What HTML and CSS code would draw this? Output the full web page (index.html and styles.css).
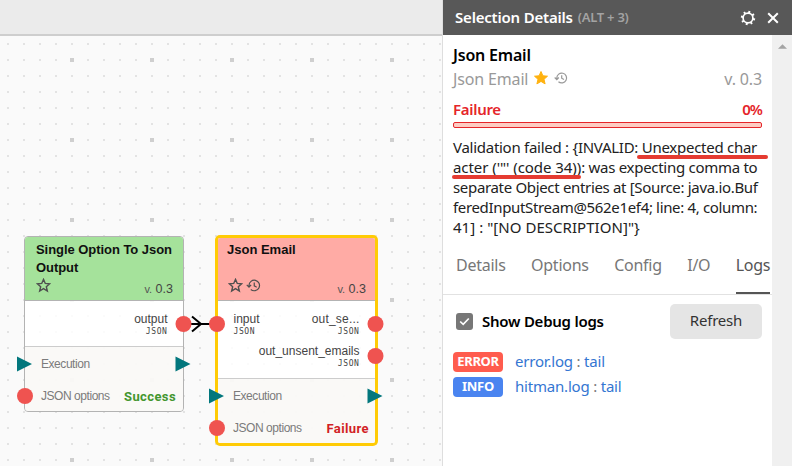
FILE: index.html
```html
<!DOCTYPE html>
<html lang="en">
<head>
<meta charset="utf-8">
<title>Selection Details</title>
<link rel="stylesheet" href="styles.css">
</head>
<body>
<svg class="defs" width="0" height="0">
  <symbol id="star" viewBox="0 0 16 16"><path d="M8 1.500l1.900 4.300 4.600.4-3.500 3.100 1.100 4.600L8 11.400l-4.100 2.500L5 9.300 1.500 6.200l4.600-.4z"/></symbol>
  <symbol id="history" viewBox="0 0 16 16"><path d="M3.200 9.200V8a5.600 5.600 0 1 1 1.900 4.200M.8 7.400l2.400 2.400 2.300-2.400M8.800 4.800v3.500l2.600 1.500"/></symbol>
</svg>
<div class="app">
  <main class="workspace">
    <div class="toolbar"></div>
    <div class="canvas">
      <section class="node node-success">
        <header class="node-head">
          <h3>Single Option To Json Output</h3>
          <div class="node-meta"><svg class="ico"><use href="#star"/></svg><span class="ver"><small>v.</small> 0.3</span></div>
        </header>
        <div class="node-ports">
          <div class="port-row"><span></span><div class="port right">output<small>JSON</small></div></div>
        </div>
        <footer class="node-foot">
          <div class="foot-row">Execution</div>
          <div class="foot-row">JSON options<b>Success</b></div>
        </footer>
      </section>
      <section class="node node-failure">
        <header class="node-head">
          <h3>Json Email</h3>
          <div class="node-meta"><svg class="ico"><use href="#star"/></svg><svg class="ico hist"><use href="#history"/></svg><span class="ver"><small>v.</small> 0.3</span></div>
        </header>
        <div class="node-ports">
          <div class="port-row"><div class="port">input<small>JSON</small></div><div class="port right trimmed">out_se...<small>JSON</small></div></div>
          <div class="port-row"><span></span><div class="port right">out_unsent_emails<small>JSON</small></div></div>
        </div>
        <footer class="node-foot">
          <div class="foot-row">Execution</div>
          <div class="foot-row">JSON options<b>Failure</b></div>
        </footer>
      </section>
      <svg class="links" viewBox="0 36 443 430">
        <path d="M184 324h33M192 316.500l9 7.500-9 7.500" fill="none" stroke="#000" stroke-width="2"/>
        <g fill="#ef5350"><circle cx="183.500" cy="324" r="8"/><circle cx="217" cy="324" r="8"/><circle cx="375.500" cy="324" r="8"/><circle cx="375.500" cy="356" r="8"/><circle cx="25" cy="396" r="8"/><circle cx="217" cy="428" r="8"/></g>
        <g fill="#02777d"><path d="M17 356.500l15 7.500-15 7.500zM175.500 356.500l15 7.500-15 7.500zM209 388.500l15 7.500-15 7.500zM367.500 388.500l15 7.500-15 7.500z"/></g>
      </svg>
    </div>
  </main>
  <aside class="panel">
    <header class="panel-head">
      <h1>Selection Details</h1><span class="hint">(ALT + 3)</span>
      <svg class="gear" viewBox="0 0 16 16"><circle cx="8" cy="8" r="4.900" fill="none" stroke="#fff" stroke-width="1.700"/><g stroke="#fff" stroke-width="2" transform="rotate(12 8 8)"><path d="M8 .8v2.200M8 13v2.200M.8 8h2.200M13 8h2.200M2.900 2.900l1.500 1.500M11.600 11.600l1.500 1.500M2.900 13.100l1.500-1.500M11.600 4.400l1.500-1.500"/></g></svg>
      <svg class="close" viewBox="0 0 12 12"><path d="M1.200 1.200l9.600 9.600M10.800 1.200L1.200 10.800" stroke="#fff" stroke-width="2"/></svg>
    </header>
    <div class="panel-body">
      <div class="content">
        <div class="info">
          <h2>Json Email</h2>
          <div class="sub"><span>Json Email</span><svg class="fav"><use href="#star"/></svg><svg class="hist2"><use href="#history"/></svg><span class="pver">v. 0.3</span></div>
          <div class="state"><span>Failure</span><span class="pct">0%</span></div>
          <div class="bar"></div>
          <p class="message">
            <span class="line l1">Validation failed : {INVALID: <mark>Unexpected char</mark></span>
            <span class="line l2"><mark class="m2">acter ('"' (code 34))</mark>: was expecting comma to</span>
            <span class="line l3">separate Object entries at [Source: java.io.Buf</span>
            <span class="line l4">feredInputStream@562e1ef4; line: 4, column:</span>
            <span class="line l5">41] : "[NO DESCRIPTION]"}</span>
          </p>
        </div>
        <nav class="tabs"><a>Details</a><a>Options</a><a>Config</a><a>I/O</a><a class="active">Logs</a></nav>
        <div class="controls">
          <span class="check"><svg viewBox="0 0 17 17"><path d="M4.200 8.500l3 2.800 5.600-5.800" fill="none" stroke="#fff" stroke-width="1.700"/></svg></span>
          <label>Show Debug logs</label>
          <button>Refresh</button>
        </div>
        <div class="logs">
          <div class="log"><span class="tag error">ERROR</span><a>error.log <i>:</i> tail</a></div>
          <div class="log"><span class="tag info-tag">INFO</span><a>hitman.log <i>:</i> tail</a></div>
        </div>
      </div>
      <div class="scroll"><svg viewBox="0 0 10 5"><path d="M5 0l5 5H0z" fill="#a3a3a3"/></svg></div>
    </div>
  </aside>
</div>
</body>
</html>
```
FILE: styles.css
```css
* { box-sizing: border-box; }
body { margin: 0; font-family: "Noto Sans", sans-serif; overflow: hidden; }
h1, h2, h3, p { margin: 0; }
.defs { position: absolute; }
.app { display: flex; width: 792px; height: 466px; }
.workspace { width: 443px; display: flex; flex-direction: column; border-right: 1px solid #dedede; }
.toolbar { height: 36px; background: #ebebeb; border-bottom: 2px solid #cecece; flex: none; }
.canvas {
  position: relative; flex: 1; background-color: #fafafa;
  background-image:
    conic-gradient(from 90deg at 76px 76px, #cfcfcf 90deg, transparent 0),
    conic-gradient(from 90deg at 14px 14px, #e3e3e3 90deg, transparent 0);
  background-size: 80px 80px, 16px 16px;
  background-position: -6px -54px, -7px -7px;
}
.node { position: absolute; display: flex; flex-direction: column; font-family: "Liberation Sans", sans-serif; border-radius: 4px; overflow: hidden; background: rgba(255,255,255,.85); }
.node-success { left: 24px; top: 200px; width: 160px; height: 176px; border: 1px solid #b3b3b3; }
.node-failure { left: 215px; top: 199px; width: 163px; height: 211px; border: 3px solid #ffcb05; border-radius: 5px; }
.node-head { height: 64px; flex: none; border-bottom: 1px solid #b3b3b3; padding: 4px 11px 0; display: flex; flex-direction: column; justify-content: space-between; }
.node-success .node-head { background: #a5e29b; }
.node-failure .node-head { background: #ffaba5; height: 63px; padding: 3px 9px 0 9px; }
.node-head h3 { font-size: 13px; line-height: 17.500px; color: #101010; }
.node-success h3 { margin-right: -4px; letter-spacing: -.05px; }
.node-meta { display: flex; align-items: center; height: 22px; position: relative; top: -3px; }
.ico { width: 15px; height: 15px; fill: none; stroke: #4f4f4f; stroke-width: 1.500; position: relative; top: -.5px; }
.node-failure .ico { left: 1px; }
.hist { margin-left: 3px; stroke-width: 1.300; }
.ver { margin-left: auto; font-size: 12.500px; color: #444; position: relative; top: 3px; }
.node-success .ver { right: -1px; }
.ver small { font-size: 11px; color: #555; }
.node-ports { flex: 1; padding: 9px 15.500px 0; }
.port-row { display: flex; justify-content: space-between; height: 32px; }
.port { font-size: 12px; line-height: 18px; color: #444; display: flex; flex-direction: column; }
.port small { font: 8px/8px "DejaVu Sans Mono", monospace; letter-spacing: .6px; }
.trimmed { letter-spacing: .2px; }
.port.right { text-align: right; }
.node-foot { border-top: 1px solid #ccc; background: rgba(248,246,244,.7); font-size: 12px; letter-spacing: -.45px; color: #7b7b7b; }
.node-success .node-foot { height: 65px; padding: 1px 7px 0 16px; }
.node-failure .node-foot { height: 65px; padding: 1px 6px 0 15px; }
.foot-row { display: flex; justify-content: space-between; align-items: center; height: 32px; }
.foot-row b { font-family: Roboto, sans-serif; font-size: 13px; letter-spacing: .4px; color: #43962f; }
.node-failure b { color: #d21f26; }
.links { position: absolute; left: 0; top: 0; width: 443px; height: 430px; }
.panel { width: 349px; background: #fff; display: flex; flex-direction: column; }
.panel-head { height: 35px; flex: none; background: #585858; color: #fff; display: flex; align-items: center; padding: 0 12px; }
.panel-head h1 { font-size: 15px; font-weight: 600; letter-spacing: -.2px; white-space: nowrap; position: relative; top: -1px; }
.hint { font-size: 13px; font-weight: 600; letter-spacing: -.25px; color: #a3a3a3; margin-left: 5px; position: relative; top: -1px; }
.gear { width: 16px; height: 16px; margin-left: auto; }
.close { width: 12px; height: 12px; margin: 0 1px 0 11px; }
.panel-body { flex: 1; display: flex; }
.content { width: 329px; overflow: hidden; }
.info { padding: 8px 10px 0; }
.info h2 { font-size: 16px; line-height: 24px; font-weight: 600; letter-spacing: -.2px; }
.sub { display: flex; align-items: center; height: 24px; font-size: 16px; letter-spacing: -.15px; color: #999; }
.fav { width: 16px; height: 16px; fill: #ffb20f; stroke: #ffb20f; margin-left: 5px; position: relative; top: -1px; }
.hist2 { width: 14px; height: 14px; fill: none; stroke: #999; stroke-width: 1.400; margin-left: 5px; position: relative; top: -1px; }
.sub .pver { margin-left: auto; }
.state { display: flex; justify-content: space-between; font-size: 15px; font-weight: 600; letter-spacing: -.3px; color: #e5252a; height: 31px; line-height: 37px; }
.pct { letter-spacing: -1px; }
.bar { height: 6px; border: 1px solid #e5252a; border-radius: 2px; background: #fdccc3; }
.message { margin-top: 9px; font-size: 15px; line-height: 20px; color: #222; }
.line { display: block; white-space: nowrap; }
.l1 { letter-spacing: -.27px; }
.l2 { letter-spacing: -.28px; }
.l2 .m2 { letter-spacing: -.06px; }
.l3 { letter-spacing: -.33px; }
.l4 { letter-spacing: -.34px; }
.l5 { letter-spacing: .04px; }
mark { position: relative; background: none; color: inherit; }
mark::after { content: ""; position: absolute; left: -5px; right: -11px; bottom: -2px; height: 4px; border-radius: 2px; background: #e53b31; }
mark.m2::after { left: -1px; right: 0; }
.tabs { display: flex; height: 58px; border-bottom: 1px solid #e2e2e2; line-height: 57px; font-size: 16px; letter-spacing: -.25px; color: #777; padding-left: 13px; gap: 25.400px; }
.tabs .active { color: #555; border-bottom: 2px solid #555; }
.controls { display: flex; align-items: center; padding: 9px 10px 0 13px; }
.check { width: 17px; height: 17px; border-radius: 3px; background: #777; }
.check svg { display: block; }
.controls label { font-size: 15px; font-weight: 600; letter-spacing: -.25px; margin-left: 9px; position: relative; top: -1px; }
.controls button { width: 92px; height: 35px; border: 0; border-radius: 5px; background: #e5e5e5; font: 15px "Noto Sans", sans-serif; letter-spacing: -.2px; color: #333; margin-left: auto; padding-bottom: 4px; }
.logs { padding: 13px 10px; display: flex; flex-direction: column; gap: 5px; }
.log { display: flex; align-items: center; height: 20px; font-size: 15px; letter-spacing: -.2px; color: #3476d2; }
.log a { position: relative; top: -1px; }
.log i { color: #777; font-style: normal; }
.tag { width: 50px; height: 20px; margin-right: 12px; border-radius: 4px; color: #fff; font-size: 13px; line-height: 19px; font-weight: 700; letter-spacing: -.3px; text-align: center; }
.error { background: #ff5c4e; }
.info-tag { background: #4a84f0; }
.scroll { width: 20px; background: #f0f0f0; padding: 9px 5px 0 6px; }
.scroll svg { display: block; width: 9px; height: 5px; }
```
